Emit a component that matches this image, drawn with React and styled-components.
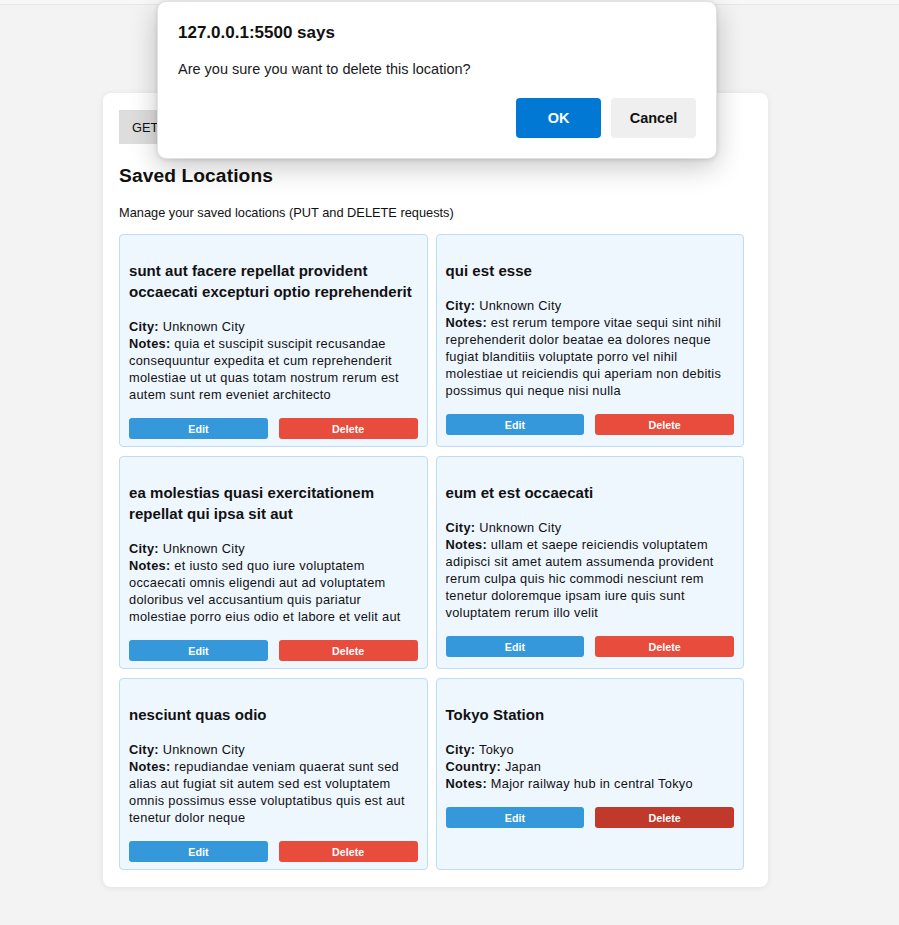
import React from "react";
import styled, { createGlobalStyle } from "styled-components";

const GlobalStyle = createGlobalStyle`
  html, body {
    margin: 0;
    padding: 0;
    background: #f3f3f3;
    font-family: "Liberation Sans", Arial, sans-serif;
    color: #111;
  }
  * { box-sizing: border-box; }
`;

const Page = styled.div`
  position: relative;
  min-height: 925px;
`;

const TopEdge = styled.div`
  height: 5px;
  background: #f8f8f8;
  border-bottom: 1px solid #e6e6e6;
`;

const Container = styled.main`
  width: 665px;
  margin: 88px 0 0 103px;
  padding: 17px 16px 17px;
  background: #fff;
  border-radius: 8px;
  box-shadow: 0 1px 6px rgba(0, 0, 0, 0.08);
`;

const Tabs = styled.nav`
  display: flex;
  gap: 8px;
`;

const Tab = styled.button`
  height: 34px;
  padding: 0 13px;
  border: none;
  border-radius: 0;
  background: #dddddd;
  color: #111;
  font-family: inherit;
  font-size: 12.8px;
`;

const Heading = styled.h2`
  margin: 19px 0 0;
  font-size: 19.2px;
  line-height: 26px;
  font-weight: 700;
  letter-spacing: 0.1px;
`;

const Intro = styled.p`
  margin: 15px 0 13px;
  font-size: 12.8px;
  line-height: 17px;
`;

const Grid = styled.section`
  display: grid;
  grid-template-columns: repeat(2, 1fr);
  column-gap: 8px;
  row-gap: 9px;
  margin-right: 8px;
`;

const Card = styled.article`
  display: flex;
  flex-direction: column;
  padding: 10px 9px 7px;
  background: #eef6fe;
  border: 1px solid #bddcf5;
  border-radius: 4px;
`;

const CardTitle = styled.h3`
  margin: 15px 0 16px;
  font-size: 15px;
  line-height: 21px;
  font-weight: 700;
  letter-spacing: 0.05px;
`;

const Info = styled.p`
  margin: 0 0 15px;
  font-size: 12.8px;
  line-height: 17px;
  letter-spacing: 0.28px;
`;

const Label = styled.strong`
  font-weight: 700;
`;

const Actions = styled.div`
  display: flex;
  gap: 11px;
`;

const ActionButton = styled.button`
  flex: 1;
  height: 21px;
  padding: 0;
  border: none;
  border-radius: 3px;
  background: ${(p) => (p.$variant === "edit" ? "#3498db" : p.$active ? "#c0392b" : "#e74c3c")};
  color: #fff;
  font-family: "Liberation Sans", Arial, sans-serif;
  font-size: 10.7px;
  font-weight: 700;
`;

const Dialog = styled.div`
  position: absolute;
  top: 1px;
  left: 157px;
  width: 560px;
  padding: 19px 20px 20px;
  background: #fff;
  border-radius: 9px;
  border: 1px solid #e2e2e2;
  box-shadow: 0 8px 28px rgba(0, 0, 0, 0.22), 0 1px 4px rgba(0, 0, 0, 0.12);
`;

const DialogTitle = styled.div`
  font-size: 17px;
  line-height: 24px;
  font-weight: 700;
  color: #111;
`;

const DialogMessage = styled.div`
  margin-top: 14px;
  font-size: 14.5px;
  line-height: 20px;
  color: #1a1a1a;
`;

const DialogActions = styled.div`
  display: flex;
  justify-content: flex-end;
  gap: 10px;
  margin-top: 19px;
`;

const DialogButton = styled.button`
  width: 85px;
  height: 40px;
  border: none;
  border-radius: 4px;
  background: ${(p) => (p.$primary ? "#0078d4" : "#efefef")};
  color: ${(p) => (p.$primary ? "#fff" : "#111")};
  font-family: "Liberation Sans", Arial, sans-serif;
  font-size: 14.5px;
  font-weight: 700;
`;

const locations = [
  {
    title: "sunt aut facere repellat provident occaecati excepturi optio reprehenderit",
    city: "Unknown City",
    notes:
      "quia et suscipit suscipit recusandae consequuntur expedita et cum reprehenderit molestiae ut ut quas totam nostrum rerum est autem sunt rem eveniet architecto",
  },
  {
    title: "qui est esse",
    city: "Unknown City",
    notes:
      "est rerum tempore vitae sequi sint nihil reprehenderit dolor beatae ea dolores neque fugiat blanditiis voluptate porro vel nihil molestiae ut reiciendis qui aperiam non debitis possimus qui neque nisi nulla",
  },
  {
    title: "ea molestias quasi exercitationem repellat qui ipsa sit aut",
    city: "Unknown City",
    notes:
      "et iusto sed quo iure voluptatem occaecati omnis eligendi aut ad voluptatem doloribus vel accusantium quis pariatur molestiae porro eius odio et labore et velit aut",
  },
  {
    title: "eum et est occaecati",
    city: "Unknown City",
    notes:
      "ullam et saepe reiciendis voluptatem adipisci sit amet autem assumenda provident rerum culpa quis hic commodi nesciunt rem tenetur doloremque ipsam iure quis sunt voluptatem rerum illo velit",
  },
  {
    title: "nesciunt quas odio",
    city: "Unknown City",
    notes:
      "repudiandae veniam quaerat sunt sed alias aut fugiat sit autem sed est voluptatem omnis possimus esse voluptatibus quis est aut tenetur dolor neque",
  },
  {
    title: "Tokyo Station",
    city: "Tokyo",
    country: "Japan",
    notes: "Major railway hub in central Tokyo",
    active: true,
  },
];

export default function App() {
  return (
    <Page>
      <GlobalStyle />
      <TopEdge />
      <Container>
        <Tabs>
          <Tab>GET Locations</Tab>
          <Tab>POST Location</Tab>
          <Tab>Saved Locations</Tab>
        </Tabs>
        <Heading>Saved Locations</Heading>
        <Intro>Manage your saved locations (PUT and DELETE requests)</Intro>
        <Grid>
          {locations.map((loc) => (
            <Card key={loc.title}>
              <CardTitle>{loc.title}</CardTitle>
              <Info>
                <Label>City:</Label> {loc.city}
                <br />
                {loc.country && (
                  <>
                    <Label>Country:</Label> {loc.country}
                    <br />
                  </>
                )}
                <Label>Notes:</Label> {loc.notes}
              </Info>
              <Actions>
                <ActionButton $variant="edit">Edit</ActionButton>
                <ActionButton $variant="delete" $active={loc.active}>
                  Delete
                </ActionButton>
              </Actions>
            </Card>
          ))}
        </Grid>
      </Container>
      <Dialog role="alertdialog">
        <DialogTitle>127.0.0.1:5500 says</DialogTitle>
        <DialogMessage>Are you sure you want to delete this location?</DialogMessage>
        <DialogActions>
          <DialogButton $primary>OK</DialogButton>
          <DialogButton>Cancel</DialogButton>
        </DialogActions>
      </Dialog>
    </Page>
  );
}
